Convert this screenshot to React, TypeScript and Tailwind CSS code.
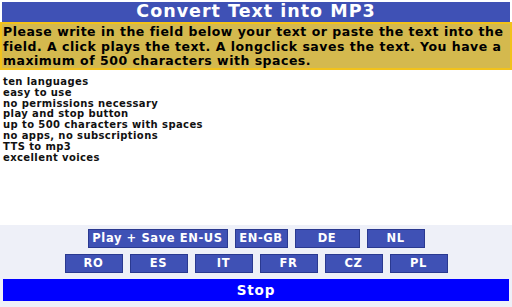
const features = [
  'ten languages',
  'easy to use',
  'no permissions necessary',
  'play and stop button',
  'up to 500 characters with spaces',
  'no apps, no subscriptions',
  'TTS to mp3',
  'excellent voices',
]

const row2 = ['RO', 'ES', 'IT', 'FR', 'CZ', 'PL']

function LangButton({ label, className = '' }: { label: string; className?: string }) {
  return (
    <button
      className={`h-[19px] bg-[#3f51b5] border border-[#2a3990] text-white text-[11.5px] font-bold leading-none tracking-[0.6px] ${className}`}
    >
      {label}
    </button>
  )
}

export default function App() {
  return (
    <div
      className="w-[512px] h-[307px] bg-white flex flex-col overflow-hidden"
      style={{ fontFamily: '"DejaVu Sans", Verdana, sans-serif' }}
    >
      <div className="mx-[2px] mt-[2px] h-[20px] bg-[#3f51b5] flex items-center justify-center">
        <h1 className="text-white font-bold text-[17.5px] leading-none tracking-[1px]">Convert Text into MP3</h1>
      </div>

      <div className="h-[48px] bg-[#d4b94e] border-2 border-[#f2c21a] pl-[1px] pt-[1px]">
        <p className="text-black font-bold text-[12.5px] leading-[14.5px] tracking-[0.5px]">
          Please write in the field below your text or paste the text into the field. A click plays the
          text. A longclick saves the text. You have a maximum of 500 characters with spaces.
        </p>
      </div>

      <div className="flex-1 px-[3px] pt-[7px]">
        {features.map((f) => (
          <p key={f} className="text-[#111] font-bold text-[10px] leading-[10.8px] tracking-[0.4px]">
            {f}
          </p>
        ))}
      </div>

      <div className="h-[82px] bg-[#eef0f8] flex flex-col items-center pt-[4px] pb-[6px]">
        <div className="flex gap-[7px] h-[19px]">
          <LangButton label="Play + Save EN-US" className="w-[140px]" />
          <LangButton label="EN-GB" className="w-[53px]" />
          <LangButton label="DE" className="w-[65px]" />
          <LangButton label="NL" className="w-[58px]" />
        </div>
        <div className="flex gap-[7px] mt-[6px]">
          {row2.map((l) => (
            <LangButton key={l} label={l} className="w-[58px]" />
          ))}
        </div>
        <button className="mt-[6px] w-[506px] h-[22px] bg-[#0000ff] text-white font-bold text-[13.5px] tracking-[0.8px]">
          Stop
        </button>
      </div>
    </div>
  )
}
